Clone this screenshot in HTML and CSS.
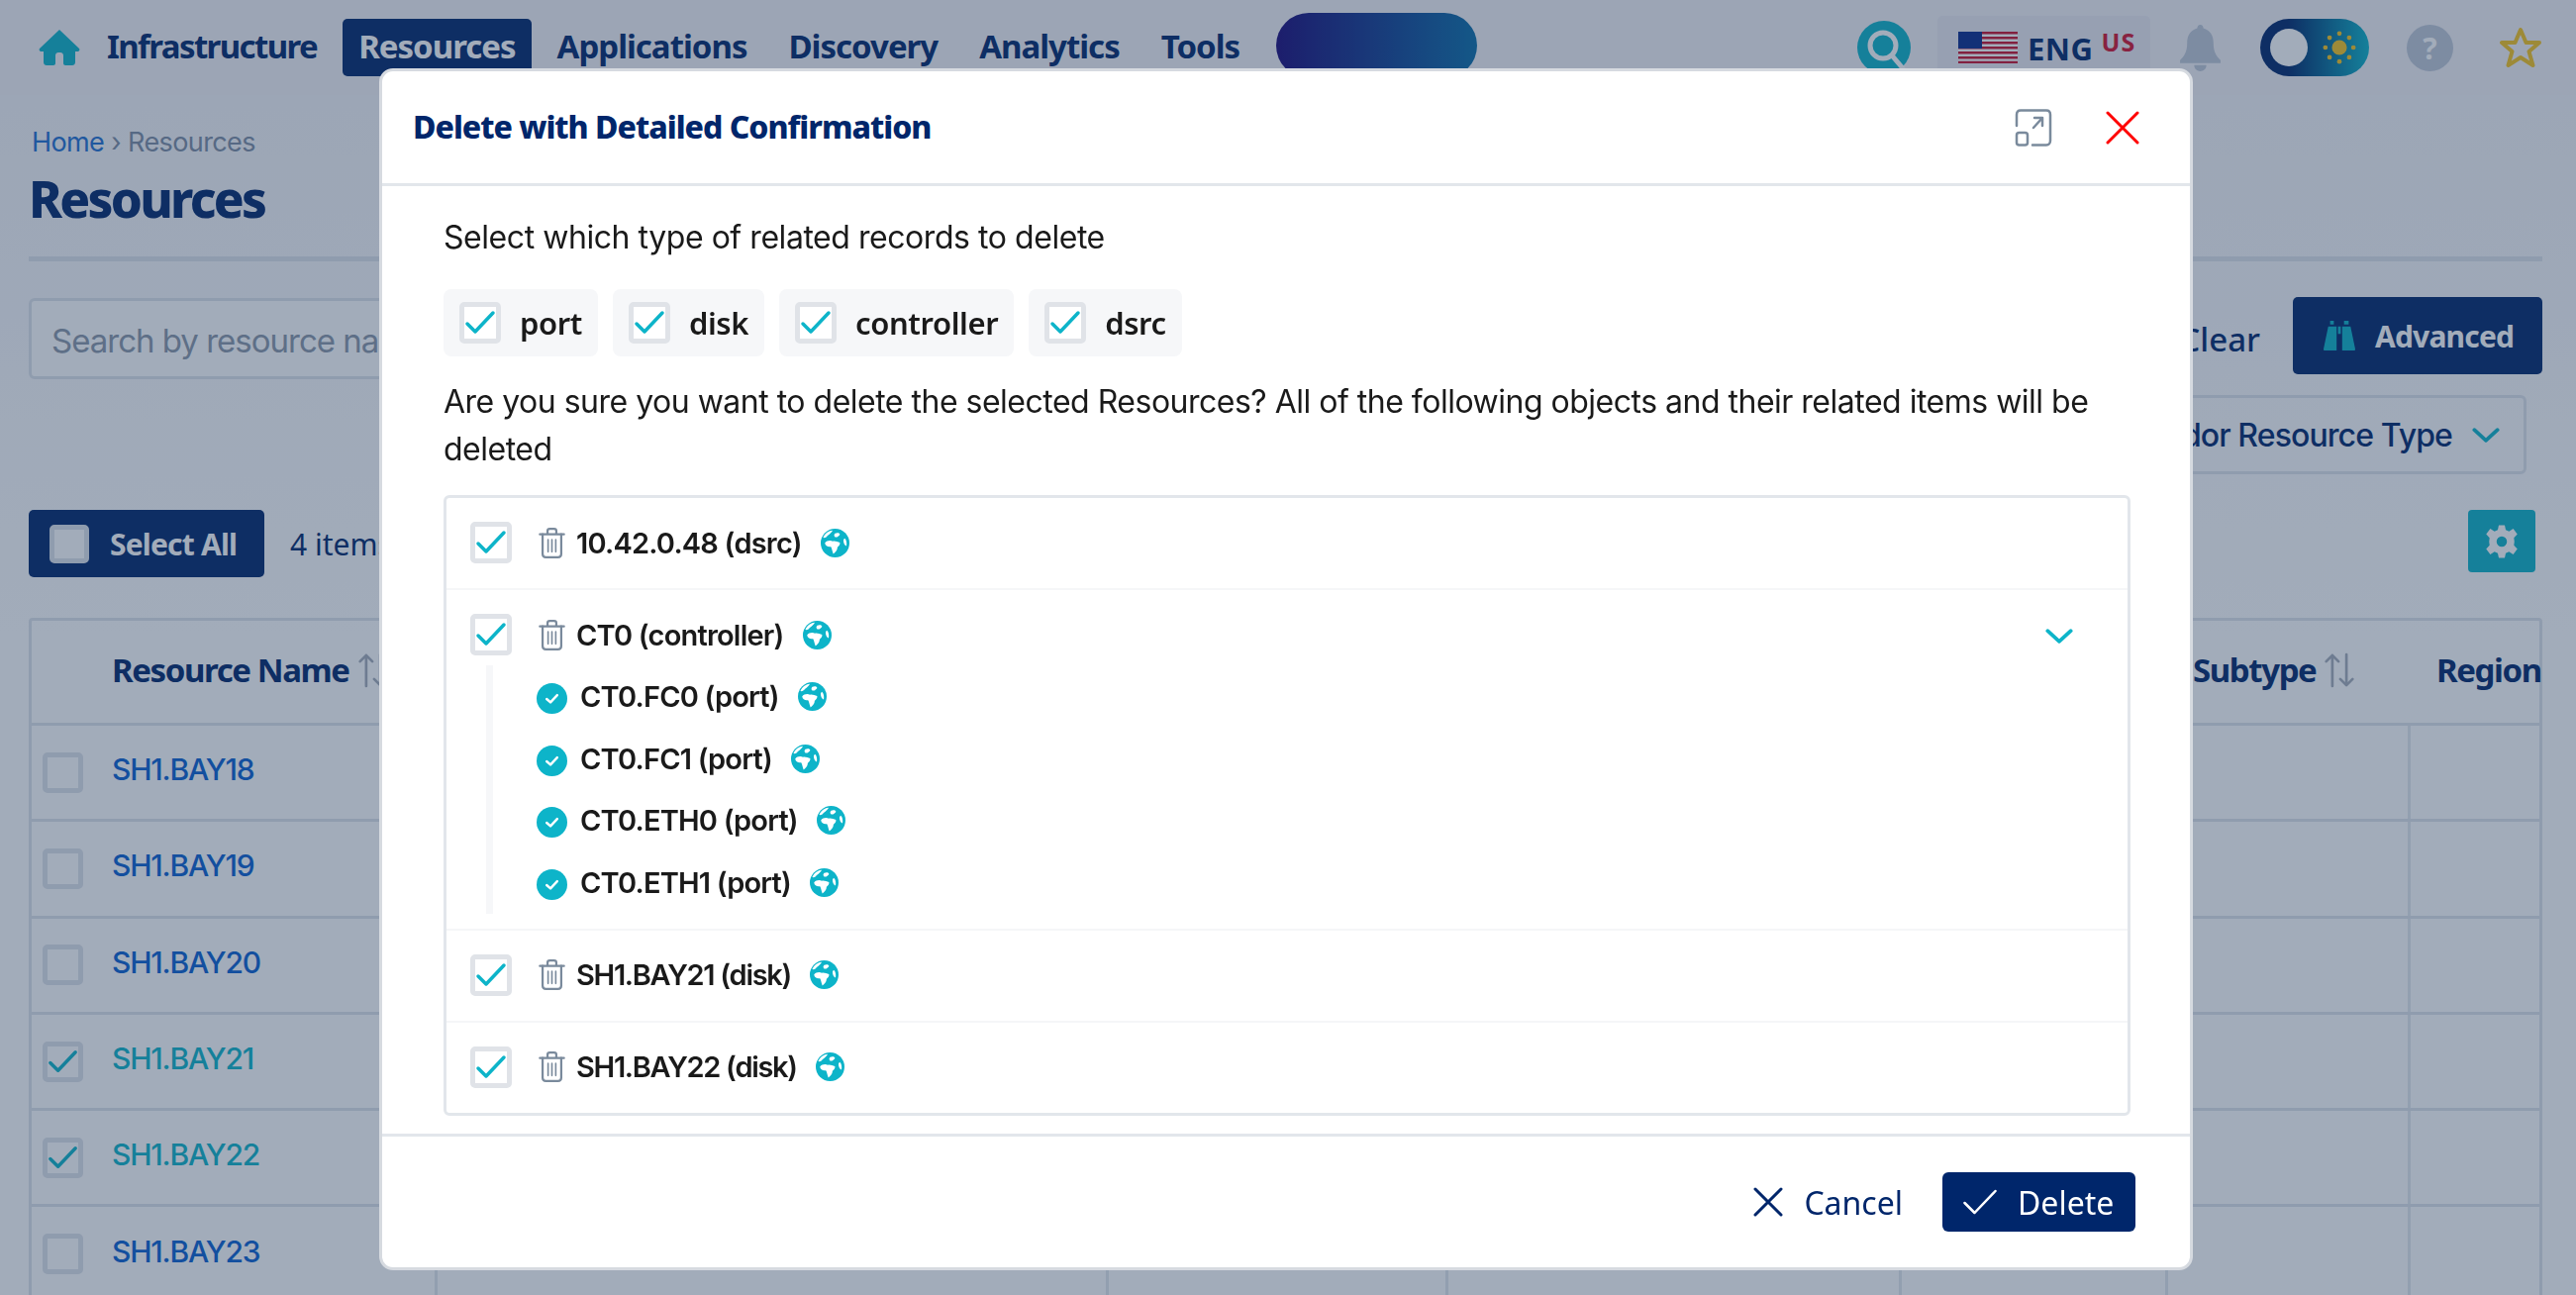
FILE: index.html
```html
<!DOCTYPE html>
<html lang="en">
<head>
  <meta charset="UTF-8">
  <title>Resources</title>
  <link rel="stylesheet" href="styles.css">
</head>
<body>
  <svg class="sprite" width="0" height="0">
    <symbol id="i-globe" viewBox="0 0 24 24">
      <circle cx="12" cy="12" r="12" fill="#0db4c9"/>
      <path fill="#fff" d="M2 7.500C4 8 5 6.500 6 5.500C7.500 4.500 9 3.500 10 1.500C7 1.500 3.500 4 2 7.500ZM3.500 12C5 10 8 9.500 10 10.500C12 10 14 11 16 11.500C16.500 13 15 14.500 14 15.500C14 18 12 20 10.500 21C9.500 18.500 9.500 16.500 8.500 15C6 15.500 4 14.500 3.500 12ZM12 4C14 3 16 3.500 16 5C15 6.500 13.500 7.500 12 7C11 6 11 5 12 4ZM20 8C21.500 9 22 12 21.500 14.500C20 14 19 12 19 10C19 9 19.500 8.500 20 8Z"/>
    </symbol>
    <symbol id="i-trash" viewBox="0 0 24 28">
      <g fill="none" stroke="#7a8a9c" stroke-width="2" stroke-linecap="round">
        <path d="M1 6H23M8 6V3C8 1.800 9 1 10 1H14C15 1 16 1.800 16 3V6"/>
        <path d="M3.500 6V24C3.500 26 4.500 27 6.500 27H17.500C19.500 27 20.500 26 20.500 24V6"/>
        <path d="M8.500 11V22M12 11V22M15.500 11V22" stroke-width="1.500"/>
      </g>
    </symbol>
    <symbol id="i-check" viewBox="0 0 42 42">
      <path d="M8 22L16 30L34 11" fill="none" stroke="#0db4c9" stroke-width="3.500" stroke-linecap="round" stroke-linejoin="round"/>
    </symbol>
    <symbol id="i-done" viewBox="0 0 32 32">
      <circle cx="16" cy="16" r="16" fill="#0db4c9"/>
      <path d="M10.500 16.500L14.500 20L21.500 12.500" fill="none" stroke="#fff" stroke-width="2.500" stroke-linecap="round" stroke-linejoin="round"/>
    </symbol>
    <symbol id="i-sort" viewBox="0 0 36 40">
      <path d="M10 38V3M3 10L10 3L17 10M26 2V37M19 30L26 37L33 30" fill="none" stroke="#818b9c" stroke-width="3" stroke-linecap="round" stroke-linejoin="round"/>
    </symbol>
  </svg>

  <!-- Page behind the dialog -->
  <div class="page">
    <header class="topbar">
      <svg class="home-icon" viewBox="0 0 42 38"><path fill="#0db4c9" d="M21 1L41 20C42 21.500 41 23 39.500 23H37V34C37 36 35.500 37 34 37H27C26 37 25 36 25 35V27C25 25 23.500 24 22 24H20C18.500 24 17 25 17 27V35C17 36 16 37 15 37H8C6.500 37 5 36 5 34V23H2.500C1 23 0 21.500 1 20Z"/></svg>
      <nav class="mainnav">
        <a class="nav-link">Infrastructure</a>
        <a class="nav-link active">Resources</a>
        <a class="nav-link">Applications</a>
        <a class="nav-link">Discovery</a>
        <a class="nav-link">Analytics</a>
        <a class="nav-link">Tools</a>
      </nav>
      <div class="promo"></div>
      <div class="top-tools">
        <svg class="search-icon" viewBox="0 0 54 54"><circle cx="27" cy="27" r="27" fill="#0db4c9"/><circle cx="26" cy="25" r="13" fill="none" stroke="#fff" stroke-width="5"/><path d="M35 35L46 48" stroke="#fff" stroke-width="5" stroke-linecap="round"/></svg>
        <div class="lang">
          <svg class="flag" viewBox="0 0 60 32">
            <rect width="60" height="32" fill="#fff"/>
            <path d="M0 1.250H60M0 6.250H60M0 11.250H60M0 16.250H60M0 21.250H60M0 26.250H60M0 31H60" stroke="#c8102e" stroke-width="2.500"/>
            <rect width="24" height="17" fill="#0a2a8c"/>
          </svg>
          <span class="lang-code">ENG</span>
          <span class="lang-sub">US</span>
        </div>
        <svg class="bell" viewBox="0 0 40 46"><path fill="#bfc8d6" d="M20 0C22 0 23 1.500 23 3.500C30 5.500 33 11 33 18C33 27 36 31 40 35V38H0V35C4 31 7 27 7 18C7 11 10 5.500 17 3.500C17 1.500 18 0 20 0ZM14 40H26C26 44 23 46 20 46C17 46 14 44 14 40Z"/></svg>
        <div class="theme-toggle">
          <span class="knob"></span>
          <svg class="sun" viewBox="0 0 36 36"><circle cx="18" cy="18" r="8" fill="#f7c520"/><g fill="#f7c520"><circle cx="18" cy="3" r="2.500"/><circle cx="18" cy="33" r="2.500"/><circle cx="3" cy="18" r="2.500"/><circle cx="33" cy="18" r="2.500"/><circle cx="7.500" cy="7.500" r="2.500"/><circle cx="28.500" cy="7.500" r="2.500"/><circle cx="7.500" cy="28.500" r="2.500"/><circle cx="28.500" cy="28.500" r="2.500"/></g></svg>
        </div>
        <div class="help">?</div>
        <svg class="star" viewBox="0 0 44 42"><path d="M22 3L27.500 16H41L30.500 25L34.500 39L22 31L9.500 39L13.500 25L3 16H16.500Z" fill="none" stroke="#f7c520" stroke-width="4" stroke-linejoin="round"/></svg>
      </div>
    </header>

    <main class="content">
      <div class="crumbs"><a class="crumb-link">Home</a> › Resources</div>
      <h1 class="page-title">Resources</h1>
      <div class="filters">
        <div class="search-box">Search by resource name</div>
        <a class="clear-link">Clear</a>
        <button class="btn-advanced">
          <svg class="binoculars" viewBox="0 0 34 32"><path fill="#0db4c9" d="M7 0H11V4H7ZM22 0H27V4H22ZM5 6H14V32H1C0 32 0 31 0 30ZM20 6H29L34 30C34 31 34 32 33 32H20ZM15.500 6H18.500V14H15.500Z"/></svg>
          Advanced
        </button>
      </div>
      <div class="filters-second">
        <div class="vendor-select">Vendor Resource Type
          <svg class="chev" viewBox="0 0 26 16"><path d="M2 3L13 13L24 3" fill="none" stroke="#0db4c9" stroke-width="3.500" stroke-linecap="round" stroke-linejoin="round"/></svg>
        </div>
      </div>
      <div class="toolbar">
        <button class="btn-select"><span class="box-dim"></span>Select All</button>
        <span class="count">4 items selected</span>
        <button class="btn-gear">
          <svg viewBox="0 0 24 24" width="36" height="38"><path fill="#fff" fill-rule="evenodd" d="M10 1H14L14.700 4.200L16.900 5.100L19.700 3.400L22.500 7L20.200 9.500L20.500 12L20.200 14.500L22.500 17L19.700 20.600L16.900 18.900L14.700 19.800L14 23H10L9.300 19.800L7.100 18.900L4.300 20.600L1.500 17L3.800 14.500L3.500 12L3.800 9.500L1.500 7L4.300 3.400L7.100 5.100L9.300 4.200ZM12 8.500A3.500 3.500 0 1 0 12 15.500A3.500 3.500 0 1 0 12 8.500Z"/></svg>
        </button>
      </div>

      <div class="grid-table">
        <div class="tr th">
          <div class="td"><span class="th-name">Resource Name</span><svg class="sort"><use href="#i-sort"/></svg></div>
          <div class="td">Resource Type</div>
          <div class="td">Vendor</div>
          <div class="td">Model</div>
          <div class="td">Serial</div>
          <div class="td td-sub">Subtype<svg class="sort"><use href="#i-sort"/></svg></div>
          <div class="td td-region">Region</div>
        </div>
        <div class="tr">
          <div class="td"><span class="box-dim row-box"></span><a class="row-link">SH1.BAY18</a></div>
          <div class="td"></div><div class="td"></div><div class="td"></div><div class="td"></div><div class="td"></div><div class="td"></div>
        </div>
        <div class="tr">
          <div class="td"><span class="box-dim row-box"></span><a class="row-link">SH1.BAY19</a></div>
          <div class="td"></div><div class="td"></div><div class="td"></div><div class="td"></div><div class="td"></div><div class="td"></div>
        </div>
        <div class="tr">
          <div class="td"><span class="box-dim row-box"></span><a class="row-link">SH1.BAY20</a></div>
          <div class="td"></div><div class="td"></div><div class="td"></div><div class="td"></div><div class="td"></div><div class="td"></div>
        </div>
        <div class="tr">
          <div class="td"><span class="box-dim row-box"><svg><use href="#i-check"/></svg></span><a class="row-link picked">SH1.BAY21</a></div>
          <div class="td"></div><div class="td"></div><div class="td"></div><div class="td"></div><div class="td"></div><div class="td"></div>
        </div>
        <div class="tr">
          <div class="td"><span class="box-dim row-box"><svg><use href="#i-check"/></svg></span><a class="row-link picked">SH1.BAY22</a></div>
          <div class="td"></div><div class="td"></div><div class="td"></div><div class="td"></div><div class="td"></div><div class="td"></div>
        </div>
        <div class="tr">
          <div class="td"><span class="box-dim row-box"></span><a class="row-link">SH1.BAY23</a></div>
          <div class="td"></div><div class="td"></div><div class="td"></div><div class="td"></div><div class="td"></div><div class="td"></div>
        </div>
      </div>
    </main>
  </div>

  <!-- Dialog -->
  <div class="backdrop">
    <div class="modal">
      <div class="modal-head">
        <h2 class="modal-title">Delete with Detailed Confirmation</h2>
        <svg class="expand-icon" viewBox="0 0 38 38"><g fill="none" stroke="#7a8a9c" stroke-width="2.500" stroke-linecap="round" stroke-linejoin="round"><path d="M2 17V6C2 3 3.500 1.500 6 1.500H32C34.500 1.500 36 3 36 6V32C36 34.500 34.500 36.500 32 36.500H18"/><rect x="2" y="24" width="11" height="12.500" rx="2.500"/><path d="M19 19L28 9M20 9H28V17"/></g></svg>
        <svg class="close-icon" viewBox="0 0 34 34"><path d="M2 2L32 32M32 2L2 32" stroke="#ff0000" stroke-width="3" stroke-linecap="round"/></svg>
      </div>

      <div class="modal-body">
        <p class="lead">Select which type of related records to delete</p>
        <div class="type-chips">
          <label class="chip"><span class="check-box"><svg><use href="#i-check"/></svg></span>port</label>
          <label class="chip"><span class="check-box"><svg><use href="#i-check"/></svg></span>disk</label>
          <label class="chip"><span class="check-box"><svg><use href="#i-check"/></svg></span>controller</label>
          <label class="chip"><span class="check-box"><svg><use href="#i-check"/></svg></span>dsrc</label>
        </div>
        <p class="warning">Are you sure you want to delete the selected Resources? All of the following objects and their related items will be deleted</p>

        <div class="tree">
          <div class="tree-row">
            <div class="tree-line">
              <span class="check-box"><svg><use href="#i-check"/></svg></span>
              <svg class="trash"><use href="#i-trash"/></svg>
              <span class="tree-text">10.42.0.48 (dsrc)</span>
              <svg class="globe"><use href="#i-globe"/></svg>
            </div>
          </div>
          <div class="tree-row">
            <div class="tree-line">
              <span class="check-box"><svg><use href="#i-check"/></svg></span>
              <svg class="trash"><use href="#i-trash"/></svg>
              <span class="tree-text">CT0 (controller)</span>
              <svg class="globe"><use href="#i-globe"/></svg>
              <svg class="tree-chev" viewBox="0 0 26 16"><path d="M2 3L13 13L24 3" fill="none" stroke="#0db4c9" stroke-width="3.500" stroke-linecap="round" stroke-linejoin="round"/></svg>
            </div>
            <ul class="children">
              <li class="child"><svg class="done"><use href="#i-done"/></svg><span class="tree-text">CT0.FC0 (port)</span><svg class="globe"><use href="#i-globe"/></svg></li>
              <li class="child"><svg class="done"><use href="#i-done"/></svg><span class="tree-text">CT0.FC1 (port)</span><svg class="globe"><use href="#i-globe"/></svg></li>
              <li class="child"><svg class="done"><use href="#i-done"/></svg><span class="tree-text">CT0.ETH0 (port)</span><svg class="globe"><use href="#i-globe"/></svg></li>
              <li class="child"><svg class="done"><use href="#i-done"/></svg><span class="tree-text">CT0.ETH1 (port)</span><svg class="globe"><use href="#i-globe"/></svg></li>
            </ul>
          </div>
          <div class="tree-row">
            <div class="tree-line">
              <span class="check-box"><svg><use href="#i-check"/></svg></span>
              <svg class="trash"><use href="#i-trash"/></svg>
              <span class="tree-text tight">SH1.BAY21 (disk)</span>
              <svg class="globe"><use href="#i-globe"/></svg>
            </div>
          </div>
          <div class="tree-row">
            <div class="tree-line">
              <span class="check-box"><svg><use href="#i-check"/></svg></span>
              <svg class="trash"><use href="#i-trash"/></svg>
              <span class="tree-text tight">SH1.BAY22 (disk)</span>
              <svg class="globe"><use href="#i-globe"/></svg>
            </div>
          </div>
        </div>
      </div>

      <div class="modal-foot">
        <button class="btn-cancel">
          <svg viewBox="0 0 30 30" width="30" height="30"><path d="M2 2L28 28M28 2L2 28" stroke="#00266b" stroke-width="3" stroke-linecap="round"/></svg>
          Cancel
        </button>
        <button class="btn-delete">
          <svg viewBox="0 0 34 26" width="34" height="26"><path d="M1.500 14L11.500 24L32.500 2" fill="none" stroke="#fff" stroke-width="2.500" stroke-linecap="round" stroke-linejoin="round"/></svg>
          Delete
        </button>
      </div>
    </div>
  </div>
</body>
</html>
```

FILE: styles.css
```css
* {
  box-sizing: border-box;
}
body {
  margin: 0;
  height: 100vh;
  overflow: hidden;
  font-family: 'Noto Sans', sans-serif;
  color: #1a1a1a;
  background: linear-gradient(#f3f3f7, #fff 640px);
}
button {
  font-family: inherit;
  border: none;
  cursor: pointer;
}
.sprite {
  position: absolute;
}

/* top bar */
.topbar {
  display: flex;
  align-items: center;
  height: 96px;
  padding: 0 34px 0 38px;
  background: #f5f3f7;
}
.home-icon {
  width: 44px;
  height: 38px;
  margin-right: 10px;
  flex: none;
}
.mainnav {
  display: flex;
  align-items: center;
  gap: 10px;
}
.nav-link {
  font-size: 33px;
  font-weight: 700;
  letter-spacing: -1px;
  color: #00266b;
  padding: 0 16px;
  height: 58px;
  line-height: 56px;
  border-radius: 5px;
}
.nav-link:first-child {
  letter-spacing: -1.600px;
}
.nav-link.active {
  background: #00266b;
  color: #fff;
}
.promo {
  width: 203px;
  height: 66px;
  margin: -4px 0 0 21px;
  border-radius: 33px;
  background: linear-gradient(90deg, #1a0a7a, #0b6ea8);
}
.top-tools {
  display: flex;
  align-items: center;
  margin-left: auto;
}
.search-icon {
  width: 54px;
  height: 54px;
}
.lang {
  display: flex;
  align-items: center;
  width: 215px;
  height: 64px;
  margin-left: 27px;
  padding-left: 21px;
  border-radius: 5px;
  background: #eceaf2;
}
.flag {
  width: 60px;
  height: 32px;
}
.lang-code {
  margin: 2px 0 0 10px;
  font-size: 31px;
  font-weight: 700;
  letter-spacing: 0.5px;
  color: #00266b;
}
.lang-sub {
  margin: -12px 0 0 8px;
  font-size: 25px;
  font-weight: 700;
  letter-spacing: 1px;
  color: #d3122f;
}
.bell {
  width: 41px;
  height: 47px;
  margin-left: 30px;
}
.theme-toggle {
  display: flex;
  align-items: center;
  justify-content: space-between;
  width: 110px;
  height: 58px;
  margin-left: 40px;
  padding: 0 13px 0 10px;
  border-radius: 29px;
  background: linear-gradient(90deg, #00266b 25%, #0db4c9);
}
.knob {
  width: 38px;
  height: 38px;
  border-radius: 50%;
  background: #fff;
}
.sun {
  width: 34px;
  height: 34px;
}
.help {
  width: 47px;
  height: 47px;
  margin-left: 38px;
  border-radius: 50%;
  background: #bfc8d6;
  color: #fff;
  font-size: 30px;
  font-weight: 700;
  line-height: 47px;
  text-align: center;
}
.star {
  width: 44px;
  height: 42px;
  margin-left: 46px;
}

/* page content */
.content {
  padding: 30px 34px 0 29px;
}
.crumbs {
  font-family: 'Inter', sans-serif;
  font-size: 27px;
  letter-spacing: -0.6px;
  padding-left: 3px;
  color: #7d8ca2;
  line-height: 36px;
}
.crumb-link {
  color: #1f6fd0;
}
.page-title {
  margin: 3px 0 0;
  padding-bottom: 24px;
  font-size: 51px;
  font-weight: 800;
  letter-spacing: -2.700px;
  line-height: 70px;
  color: #00266b;
  border-bottom: 5px solid #dfe3ea;
}
.filters {
  display: flex;
  align-items: center;
  margin-top: 37px;
}
.search-box {
  width: 700px;
  height: 82px;
  padding-left: 20px;
  border: 3px solid #dfe3ea;
  border-radius: 6px;
  background: #fff;
  font-family: 'Inter', sans-serif;
  font-size: 33px;
  letter-spacing: -1px;
  line-height: 80px;
  color: #8b97a8;
}
.clear-link {
  margin-left: auto;
  font-size: 33px;
  font-weight: 500;
  color: #00266b;
}
.btn-advanced {
  display: flex;
  align-items: center;
  align-self: flex-start;
  gap: 19px;
  width: 252px;
  height: 78px;
  margin: -1px 0 0 33px;
  padding-left: 30px;
  border-radius: 5px;
  background: #00266b;
  color: #fff;
  font-size: 30px;
  font-weight: 700;
  letter-spacing: -0.8px;
}
.binoculars {
  width: 34px;
  height: 30px;
}
.filters-second {
  display: flex;
  justify-content: flex-end;
  margin-top: 16px;
  padding-right: 16px;
}
.vendor-select {
  display: flex;
  align-items: center;
  justify-content: flex-end;
  gap: 20px;
  width: 600px;
  height: 80px;
  padding-right: 24px;
  border: 3px solid #dfe3ea;
  border-radius: 6px;
  font-family: 'Inter', sans-serif;
  font-size: 32px;
  font-weight: 500;
  letter-spacing: -0.9px;
  color: #00266b;
}
.chev {
  width: 28px;
  height: 17px;
}
.toolbar {
  display: flex;
  align-items: center;
  margin-top: 36px;
}
.btn-select {
  display: flex;
  align-items: center;
  gap: 21px;
  width: 238px;
  height: 68px;
  padding-left: 21px;
  border-radius: 5px;
  background: #00266b;
  color: #fff;
  font-size: 30px;
  font-weight: 700;
  letter-spacing: -0.8px;
}
.box-dim {
  display: block;
  width: 40px;
  height: 39px;
  border: 5px solid #dfe3ea;
  border-radius: 5px;
  background: #fff;
  flex: none;
}
.count {
  margin-left: 26px;
  font-size: 30px;
  color: #00266b;
}
.btn-gear {
  display: flex;
  align-items: center;
  justify-content: center;
  align-self: flex-start;
  width: 68px;
  height: 63px;
  margin: 0 7px 0 auto;
  border-radius: 4px;
  background: #0db4c9;
}

/* table */
.grid-table {
  margin-top: 41px;
  border: 3px solid #dfe3ea;
  border-radius: 4px;
}
.tr {
  display: grid;
  grid-template-columns: 410px 678px 343px 458px 269px 245px 1fr;
  height: 97.300px;
  border-bottom: 3px solid #dfe3ea;
}
.tr .td:last-child {
  border-right: none;
}
.td {
  display: flex;
  align-items: center;
  border-right: 3px solid #e4e8ee;
  padding-left: 11px;
  white-space: nowrap;
}
.tr.th {
  height: 106px;
  align-items: center;
  font-size: 33px;
  font-weight: 700;
  letter-spacing: -1.400px;
  color: #00266b;
}
.tr.th .td {
  border-right: none;
  height: 100%;
  padding-bottom: 4px;
}
.th-name {
  padding-left: 70px;
}
.sort {
  width: 32px;
  height: 38px;
  margin-left: 8px;
  opacity: 0.7;
}
.td-sub {
  padding-left: 25px;
}
.td-region {
  padding-left: 26px;
}
.row-box {
  width: 41px;
  height: 41px;
}
.row-box svg {
  width: 41px;
  height: 41px;
  margin: -5px;
}
.row-link {
  margin-left: 29px;
  font-family: 'Inter', sans-serif;
  font-size: 30px;
  font-weight: 500;
  letter-spacing: -1.200px;
  color: #0a5fd0;
  transform: translateY(-3px);
}
.row-link.picked {
  color: #0db4c9;
}

/* dialog */
.backdrop {
  position: fixed;
  inset: 0;
  display: flex;
  justify-content: center;
  align-items: flex-start;
  padding-top: 69px;
  background: rgba(33, 57, 90, 0.42);
}
.modal {
  display: flex;
  flex-direction: column;
  width: 1832px;
  height: 1214px;
  margin-left: -4px;
  border: 3px solid #d6dae0;
  border-radius: 14px;
  background: #fff;
}
.modal-head {
  display: flex;
  align-items: center;
  height: 116px;
  padding: 0 51px 0 31px;
  border-bottom: 3px solid #e2e6eb;
  flex: none;
}
.modal-title {
  margin: 0 auto 2px 0;
  font-size: 32px;
  font-weight: 800;
  letter-spacing: -1px;
  color: #00266b;
}
.expand-icon {
  width: 38px;
  height: 38px;
}
.close-icon {
  width: 34px;
  height: 34px;
  margin-left: 54px;
}
.modal-body {
  flex: 1;
  padding: 28px 60px 0 62px;
  font-family: 'Inter', sans-serif;
}
.lead,
.warning {
  margin: 0;
  font-size: 32px;
  letter-spacing: -0.45px;
  line-height: 48px;
  color: #1a1a1a;
}
.type-chips {
  display: flex;
  gap: 15px;
  margin-top: 28px;
}
.chip {
  display: flex;
  align-items: center;
  gap: 19px;
  height: 68px;
  padding: 0 16px;
  border-radius: 8px;
  background: #f6f7f9;
  font-family: 'Noto Sans', sans-serif;
  font-size: 31px;
  font-weight: 600;
  letter-spacing: -0.4px;
}
.check-box {
  display: block;
  width: 42px;
  height: 42px;
  border: 5px solid #e0e3e8;
  border-radius: 5px;
  background: #fff;
  flex: none;
}
.check-box svg {
  display: block;
  width: 42px;
  height: 42px;
  margin: -5px;
}
.warning {
  margin-top: 22px;
  letter-spacing: -0.5px;
}
.tree {
  margin-top: 22px;
  border: 3px solid #e2e6eb;
  border-radius: 6px;
}
.tree-row {
  padding-top: 24px;
  border-bottom: 2px solid #f5f6f8;
}
.tree-row:last-child {
  border-bottom: none;
}
.tree-line {
  display: flex;
  align-items: center;
  height: 42px;
  margin-bottom: 25px;
  padding-left: 24px;
}
.trash {
  width: 27px;
  height: 31px;
  margin-left: 27px;
  flex: none;
}
.tree-text {
  margin-left: 11px;
  font-size: 29px;
  font-weight: 600;
  letter-spacing: -0.8px;
  color: #1a1a1a;
}
.tree-text.tight {
  letter-spacing: -1.300px;
}
.globe {
  width: 29px;
  height: 29px;
  margin-left: 19px;
  flex: none;
}
.tree-chev {
  width: 28px;
  height: 17px;
  margin: 3px 55px 0 auto;
}
.children {
  list-style: none;
  margin: -15px 0 15px 40px;
  padding: 0 0 0 44px;
  border-left: 7px solid #f6f7f9;
}
.child {
  display: flex;
  align-items: center;
  height: 62.700px;
}
.done {
  width: 31px;
  height: 31px;
  flex: none;
  transform: translateY(2px);
}
.child .tree-text {
  margin-left: 13px;
}

/* footer */
.modal-foot {
  display: flex;
  align-items: center;
  justify-content: flex-end;
  gap: 40px;
  height: 135px;
  padding: 0 55px 0 0;
  border-top: 3px solid #e2e6eb;
  flex: none;
}
.btn-cancel,
.btn-delete {
  display: flex;
  align-items: center;
  font-size: 32px;
}
.btn-cancel {
  gap: 21px;
  padding: 0;
  background: none;
  color: #00266b;
}
.btn-delete {
  gap: 21px;
  width: 195px;
  height: 60px;
  padding-left: 21px;
  border-radius: 6px;
  background: #00266b;
  color: #fff;
}
```
